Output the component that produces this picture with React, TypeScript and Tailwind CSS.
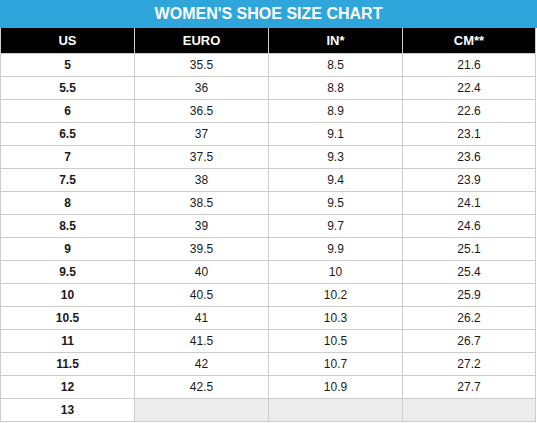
const ROWS: [string, string, string, string][] = [
  ['5', '35.5', '8.5', '21.6'],
  ['5.5', '36', '8.8', '22.4'],
  ['6', '36.5', '8.9', '22.6'],
  ['6.5', '37', '9.1', '23.1'],
  ['7', '37.5', '9.3', '23.6'],
  ['7.5', '38', '9.4', '23.9'],
  ['8', '38.5', '9.5', '24.1'],
  ['8.5', '39', '9.7', '24.6'],
  ['9', '39.5', '9.9', '25.1'],
  ['9.5', '40', '10', '25.4'],
  ['10', '40.5', '10.2', '25.9'],
  ['10.5', '41', '10.3', '26.2'],
  ['11', '41.5', '10.5', '26.7'],
  ['11.5', '42', '10.7', '27.2'],
  ['12', '42.5', '10.9', '27.7'],
  ['13', '', '', ''],
]

const HEAD = ['US', 'EURO', 'IN*', 'CM**']

export default function App() {
  return (
    <div className="w-[537px] h-[423px] bg-white overflow-hidden" style={{ fontFamily: '"Liberation Sans", Arial, sans-serif' }}>
      <div className="h-[28px] bg-[#2ea6dc] flex items-center justify-center text-white font-bold text-[16px]">
        WOMEN'S SHOE SIZE CHART
      </div>
      <div className="w-[536px] border-l border-r border-[#cccccc]">
        <div className="grid grid-cols-[134px_134px_134px_1fr] h-[26px] bg-black border-b border-[#cccccc]">
          {HEAD.map((h, i) => (
            <div
              key={h}
              className={`flex items-center justify-center text-white font-bold text-[13px] ${i < 3 ? 'border-r border-[#cccccc]' : ''}`}
            >
              {h}
            </div>
          ))}
        </div>
        {ROWS.map((r) => (
          <div key={r[0]} className="grid grid-cols-[134px_134px_134px_1fr] h-[23px] border-b border-[#cccccc]">
            {r.map((c, i) => (
              <div
                key={i}
                className={`flex items-center justify-center text-[12px] text-[#1a1a1a] ${i === 0 ? 'font-bold' : ''} ${i < 3 ? 'border-r border-[#cccccc]' : ''} ${c === '' ? 'bg-[#ececec]' : ''}`}
              >
                {c}
              </div>
            ))}
          </div>
        ))}
      </div>
    </div>
  )
}
